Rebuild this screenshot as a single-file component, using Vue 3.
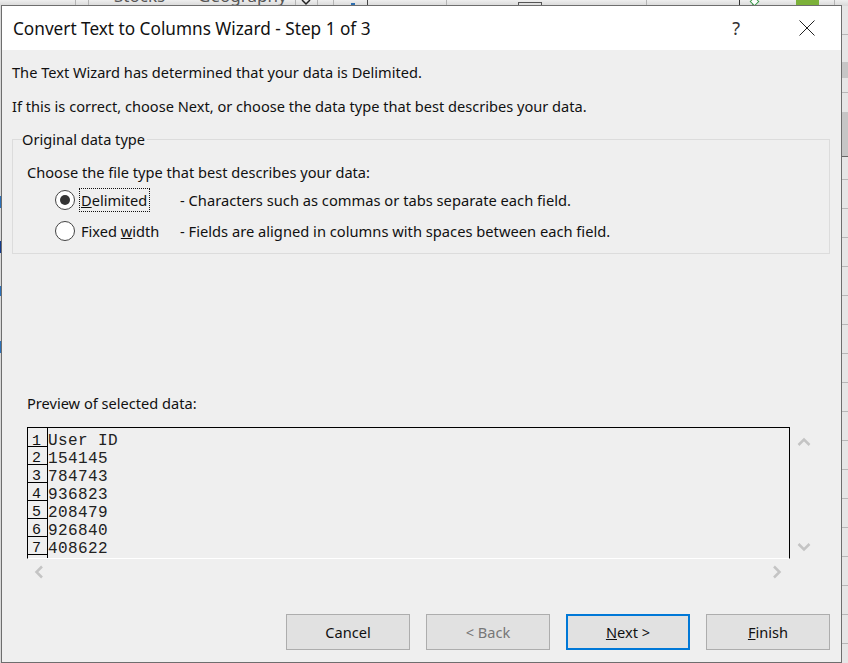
<script setup>
const rows = ['User ID', '154145', '784743', '936823', '208479', '926840', '408622']
const numbers = [1, 2, 3, 4, 5, 6, 7]
const ribbonLines = [75, 88, 295, 317, 333, 446, 646, 834]
</script>

<template>
  <div class="screen">
    <div class="ribbon">
      <span v-for="x in ribbonLines" :key="x" class="rib-line" :style="{ left: x + 'px' }"></span>
      <span class="rib-line dark"></span>
      <span class="rib-text stocks">Stocks</span>
      <span class="rib-text geo">Geography</span>
      <svg class="rib-chev" width="10" height="6" viewBox="0 0 10 6"><path d="M1 0l4 4 4-4" fill="none" stroke="#222" stroke-width="1.500" /></svg>
      <span class="rib-blue"></span>
      <span class="rib-box"></span>
      <span class="rib-doc"></span>
      <span class="rib-diamond"></span>
      <span class="rib-green"></span>
    </div>
    <div class="left-strip">
      <span class="mark m1"></span><span class="mark m2"></span><span class="mark m3"></span><span class="mark m4"></span>
    </div>
    <div class="right-strip">
      <span class="shade s1"></span><span class="shade s2"></span>
    </div>
    <div class="dialog">
      <header class="titlebar">
        <span class="title">Convert Text to Columns Wizard - Step 1 of 3</span>
        <span class="help">?</span>
        <svg class="close" width="16" height="16" viewBox="0 0 16 16">
          <path d="M.5.5l15 15M15.500.5l-15 15" stroke="#222" fill="none" />
        </svg>
      </header>
      <main class="body">
        <p class="line first">The Text Wizard has determined that your data is Delimited.</p>
        <p class="line second">If this is correct, choose Next, or choose the data type that best describes your data.</p>
        <fieldset class="group">
          <legend class="legend">Original data type</legend>
          <p class="choose">Choose the file type that best describes your data:</p>
          <div class="radio-row r1">
            <span class="radio"><span class="dot"></span></span>
            <span class="label focus"><u>D</u>elimited</span>
            <span class="desc">- Characters such as commas or tabs separate each field.</span>
          </div>
          <div class="radio-row r2">
            <span class="radio"></span>
            <span class="label">Fixed <u>w</u>idth</span>
            <span class="desc">- Fields are aligned in columns with spaces between each field.</span>
          </div>
        </fieldset>
        <p class="preview-label">Preview of selected data:</p>
        <div class="preview-wrap">
          <div class="preview">
            <div class="nums">
              <div v-for="n in numbers" :key="n" class="num">{{ n }}</div>
              <div class="num"></div>
            </div>
            <div class="data">
              <div v-for="r in rows" :key="r" class="cell">{{ r }}</div>
            </div>
          </div>
          <div class="vscroll">
            <svg width="14" height="10" viewBox="0 0 14 10"><path d="M1.500 8L7 2.500 12.500 8" class="chev" /></svg>
            <svg width="14" height="10" viewBox="0 0 14 10"><path d="M1.500 2L7 7.500 12.500 2" class="chev" /></svg>
          </div>
        </div>
        <div class="hscroll">
          <svg width="10" height="14" viewBox="0 0 10 14"><path d="M8 1.500L2.500 7 8 12.500" class="chev" /></svg>
          <svg width="10" height="14" viewBox="0 0 10 14"><path d="M2 1.500L7.500 7 2 12.500" class="chev" /></svg>
        </div>
        <div class="buttons">
          <button class="btn">Cancel</button>
          <button class="btn disabled">&lt; Back</button>
          <button class="btn primary"><u>N</u>ext &gt;</button>
          <button class="btn"><u>F</u>inish</button>
        </div>
      </main>
    </div>
  </div>
</template>

<style>
html, body { margin: 0; background: #fff; overflow: hidden; }
</style>

<style scoped>
.screen {
  position: relative;
  width: 848px;
  height: 663px;
  overflow: hidden;
  background: #e8e8e8;
  font-family: "Noto Sans", "Open Sans", sans-serif;
  color: #111;
}
.ribbon {
  position: absolute;
  left: 0;
  right: 0;
  top: 0;
  height: 6px;
  overflow: hidden;
  background: linear-gradient(#eeeeee, #d8d8d8);
}
.rib-line { position: absolute; top: 0; width: 1px; height: 6px; background: #b4b4b4; }
.rib-line.dark { left: 367px; background: #444; }
.rib-text { position: absolute; top: -15px; font-size: 17px; line-height: 22px; color: #555; }
.stocks { left: 114px; }
.geo { left: 198px; }
.rib-chev { position: absolute; left: 301px; top: 0; }
.rib-blue { position: absolute; left: 351px; top: 3px; width: 4px; height: 3px; background: #2f6fb0; }
.rib-box { position: absolute; left: 518px; top: 2px; width: 22px; height: 8px; border: 1px solid #555; }
.rib-doc { position: absolute; left: 739px; top: -6px; width: 12px; height: 10px; border: 1px solid #333; }
.rib-diamond { position: absolute; left: 751px; top: -2px; width: 5px; height: 5px; border: 1.500px solid #3b9a4a; transform: rotate(45deg); background: #fff; }
.rib-green { position: absolute; left: 796px; top: 0; width: 23px; height: 6px; background: #7cb13a; }
.left-strip { position: absolute; left: 0; top: 6px; width: 1px; height: 657px; background: #d8d8d8; }
.mark { position: absolute; left: 0; width: 1px; background: #2b70b8; }
.m1 { top: 190px; height: 12px; }
.m2 { top: 235px; height: 12px; background: #123a8c; }
.m3 { top: 280px; height: 10px; }
.m4 { top: 335px; height: 12px; }
.right-strip {
  position: absolute;
  left: 842px;
  top: 6px;
  width: 6px;
  height: 657px;
  background: repeating-linear-gradient(#e6e6e6 0 28px, #b8b8b8 28px 29px);
}
.shade { position: absolute; left: 0; width: 6px; background: #c6c6c6; }
.s1 { top: 56px; height: 16px; }
.s2 { top: 106px; height: 44px; border-bottom: 1px solid #666; }
.dialog {
  position: absolute;
  left: 1px;
  top: 5px;
  width: 841px;
  height: 658px;
  box-sizing: border-box;
  border: 1px solid #6e6e6e;
  background: #efefef;
  display: flex;
  flex-direction: column;
}
.titlebar {
  height: 44px;
  flex: none;
  background: #fff;
  display: flex;
  align-items: center;
  padding: 0 26px 0 11px;
}
.title { font-size: 17.200px; flex: 1; }
.help { font-size: 18px; color: #333; margin-right: 59px; }
.body { flex: 1; padding: 0 11px 0 10px; display: flex; flex-direction: column; min-height: 0; }
.line { margin: 0; font-size: 14.600px; line-height: 20px; white-space: nowrap; }
.first { margin-top: 12px; }
.second { margin-top: 14px; }
.group {
  margin: 13px 0 0;
  padding: 0 0 0 14px;
  height: 125px;
  width: 818px;
  box-sizing: border-box;
  border: 1px solid #dcdcdc;
  font-size: 14.600px;
  min-width: 0;
}
.legend { padding: 0 2px 0 0; margin-left: -5px; line-height: 20px; height: 20px; }
.choose { margin: 13px 0 0; line-height: 20px; }
.radio-row { display: flex; align-items: center; height: 24px; }
.r1 { margin-top: 6px; }
.r2 { margin-top: 7px; }
.radio {
  width: 20px;
  height: 20px;
  box-sizing: border-box;
  margin-left: 28px;
  border: 1.500px solid #444;
  border-radius: 50%;
  background: #fff;
  display: flex;
  align-items: center;
  justify-content: center;
  flex: none;
}
.dot { width: 10px; height: 10px; border-radius: 50%; background: #333; }
.label {
  width: 71px;
  margin-left: 4px;
  white-space: nowrap;
  line-height: 22px;
  box-sizing: border-box;
  padding-left: 1px;
  border: 1px solid transparent;
}
.focus { border: 1px dotted #111; }
.desc { margin-left: 30px; white-space: nowrap; font-size: 14.700px; }
.preview-label { margin: 139px 0 0 15px; font-size: 14.600px; line-height: 20px; }
.preview-wrap { display: flex; margin: 14px 0 0 15px; height: 132px; }
.preview {
  width: 763px;
  height: 132px;
  box-sizing: border-box;
  border: 1px solid #000;
  border-bottom-color: #fff;
  display: flex;
  overflow: hidden;
  font-family: "Liberation Mono", monospace;
  font-size: 16px;
  line-height: 18px;
}
.nums { width: 20px; box-sizing: border-box; border-right: 1px solid #000; flex: none; height: 130px; overflow: hidden; }
.num {
  height: 18px;
  box-sizing: border-box;
  border-bottom: 1px solid #000;
  text-align: right;
  padding-right: 6px;
  font-size: 15px;
  line-height: 24px;
}
.num:first-child { height: 19px; line-height: 28px; }
.data { letter-spacing: 0.400px; padding-top: 4px; color: #222; }
.cell { height: 18px; }
.vscroll {
  width: 26px;
  padding: 10px 0 5px 1px;
  height: 115px;
  display: flex;
  flex-direction: column;
  justify-content: space-between;
  align-items: center;
}
.chev { fill: none; stroke: #c4c4c4; stroke-width: 2.500; }
.hscroll { display: flex; justify-content: space-between; width: 748px; margin: 6px 0 0 22px; height: 14px; }
.buttons { display: flex; justify-content: flex-end; gap: 16px; margin-top: 35px; }
.btn {
  width: 124px;
  height: 36px;
  box-sizing: border-box;
  background: #e1e1e1;
  border: 1px solid #adadad;
  border-radius: 0;
  font: inherit;
  font-size: 14.600px;
  color: #111;
  padding: 0;
}
.disabled { color: #777; }
.primary { border: 2px solid #0078d7; }
</style>
